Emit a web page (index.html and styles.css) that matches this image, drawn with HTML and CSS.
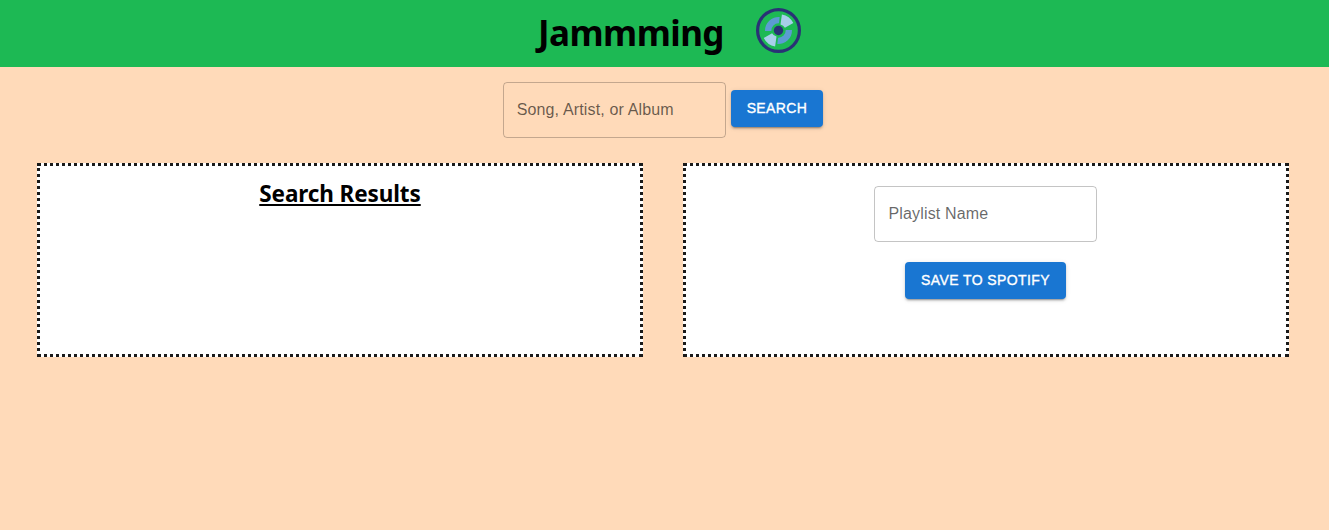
FILE: index.html
```html
<!DOCTYPE html>
<html lang="en">
<head>
<meta charset="utf-8">
<title>Jammming</title>
<link rel="stylesheet" href="styles.css">
</head>
<body>
<header class="header">
  <h1 class="title">Jammming</h1>
  <svg class="logo" viewBox="0 0 46 46" aria-hidden="true">
    <g transform="translate(-0.5 0.5)">
    <circle cx="23" cy="23" r="20.9" fill="none" stroke="#293275" stroke-width="3.2"/>
    <g fill="#5c9bd3">
      <path d="M9.5 23.4A13.5 13.5 0 0 1 24.2 9.6L23.4 15.8A7.2 7.2 0 0 0 15.8 23.4Z"/>
      <path d="M36.5 22.6A13.5 13.5 0 0 1 21.8 36.4L22.6 30.2A7.2 7.2 0 0 0 30.2 22.6Z"/>
    </g>
    <g fill="#a8cfea">
      <path d="M26.4 7.1A16.2 16.2 0 0 1 37.8 15.6L29.4 20.3A7 7 0 0 0 25 16.9Z"/>
      <path d="M19.6 38.9A16.2 16.2 0 0 1 8.2 30.4L16.6 25.7A7 7 0 0 0 21 29.1Z"/>
    </g>
    <circle cx="23" cy="23" r="4.7" fill="#293275"/>
    </g>
  </svg>
</header>
<form class="search">
  <label class="field">Song, Artist, or Album</label>
  <button class="button" type="button">SEARCH</button>
</form>
<main class="panels">
  <section class="panel">
    <h2 class="heading"><span class="heading-text">Search Results</span></h2>
  </section>
  <section class="panel playlist">
    <label class="field">Playlist Name</label>
    <button class="button" type="button">SAVE TO SPOTIFY</button>
  </section>
</main>
</body>
</html>
```
FILE: styles.css
```css
* { box-sizing: border-box; }
body {
  margin: 0;
  min-height: 100vh;
  background: #ffdab9;
  font-family: "Liberation Sans", Arial, sans-serif;
}
.header {
  height: 67px;
  display: flex;
  justify-content: center;
  align-items: flex-start;
  gap: 32px;
  padding-left: 11px;
  background: #1db954;
}
.title {
  margin: 0;
  font: 700 35px/66px "Noto Sans", sans-serif;
  letter-spacing: -0.55px;
  color: #000;
}
.logo { width: 46px; height: 46px; margin-top: 7px; overflow: visible; }
.search {
  display: flex;
  justify-content: center;
  align-items: flex-start;
  gap: 5px;
  padding: 15px 3px 0 0;
}
.field {
  display: block;
  width: 223px;
  height: 56px;
  padding: 0 13px;
  border: 1px solid rgba(0, 0, 0, 0.23);
  border-radius: 4px;
  font-size: 16px;
  line-height: 54px;
  letter-spacing: 0.15px;
  color: rgba(0, 0, 0, 0.6);
}
.button {
  height: 37px;
  padding: 0 16px 1px;
  border: 0;
  border-radius: 4px;
  background: #1976d2;
  color: #fff;
  font: 500 14px/35px "Liberation Sans", Arial, sans-serif;
  letter-spacing: 0.4px;
  -webkit-text-stroke: 0.35px #fff;
  box-shadow: 0 3px 1px -2px rgba(0, 0, 0, 0.2), 0 2px 2px 0 rgba(0, 0, 0, 0.14), 0 1px 5px 0 rgba(0, 0, 0, 0.12);
}
.search .button { margin-top: 8px; }
.panels {
  display: flex;
  gap: 40px;
  padding: 25px 0 0 37px;
}
.panel {
  width: 606px;
  height: 194px;
  border: 3px dotted #1a1a1a;
  background: #fff;
}
.heading {
  margin: 0;
  padding-top: 11px;
  text-align: center;
  font: 700 22.5px/34px "Noto Sans", sans-serif;
  letter-spacing: -0.1px;
  color: #000;
}
.heading-text {
  text-decoration: underline;
  text-decoration-thickness: 2px;
  text-underline-offset: 2px;
}
.playlist {
  display: flex;
  flex-direction: column;
  align-items: center;
  gap: 20px;
  padding: 20px 1px 0 0;
}
.playlist .field { padding-left: 13.5px; }
```
